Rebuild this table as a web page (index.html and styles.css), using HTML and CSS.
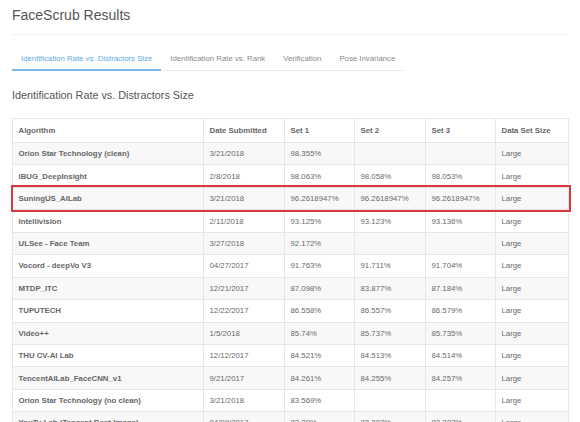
FILE: index.html
```html
<!DOCTYPE html>
<html lang="en">
<head>
<meta charset="utf-8">
<title>FaceScrub Results</title>
<link rel="stylesheet" href="styles.css">
</head>
<body>
<div class="page">
  <h1 class="title">FaceScrub Results</h1>
  <nav class="tabs">
    <a class="tab active">Identification Rate vs. Distractors Size</a>
    <a class="tab">Identification Rate vs. Rank</a>
    <a class="tab">Verification</a>
    <a class="tab">Pose Invariance</a>
  </nav>
  <h2 class="section-title">Identification Rate vs. Distractors Size</h2>
  <table class="results">
    <colgroup>
      <col class="c-alg"><col class="c-date"><col class="c-set1"><col class="c-set2"><col class="c-set3"><col class="c-size">
    </colgroup>
    <thead>
      <tr><th>Algorithm</th><th>Date Submitted</th><th>Set 1</th><th>Set 2</th><th>Set 3</th><th>Data Set Size</th></tr>
    </thead>
    <tbody>
      <tr><td class="name">Orion Star Technology (clean)</td><td>3/21/2018</td><td>98.355%</td><td></td><td></td><td>Large</td></tr>
      <tr><td class="name">iBUG_DeepInsight</td><td>2/8/2018</td><td>98.063%</td><td>98.058%</td><td>98.053%</td><td>Large</td></tr>
      <tr class="highlight"><td class="name">SuningUS_AILab</td><td>3/21/2018</td><td>96.2618947%</td><td>96.2618947%</td><td>96.2618947%</td><td>Large</td></tr>
      <tr><td class="name">Intellivision</td><td>2/11/2018</td><td>93.125%</td><td>93.123%</td><td>93.136%</td><td>Large</td></tr>
      <tr><td class="name">ULSee - Face Team</td><td>3/27/2018</td><td>92.172%</td><td></td><td></td><td>Large</td></tr>
      <tr><td class="name">Vocord - deepVo V3</td><td>04/27/2017</td><td>91.763%</td><td>91.711%</td><td>91.704%</td><td>Large</td></tr>
      <tr><td class="name">MTDP_ITC</td><td>12/21/2017</td><td>87.098%</td><td>83.877%</td><td>87.184%</td><td>Large</td></tr>
      <tr><td class="name">TUPUTECH</td><td>12/22/2017</td><td>86.558%</td><td>86.557%</td><td>86.579%</td><td>Large</td></tr>
      <tr><td class="name">Video++</td><td>1/5/2018</td><td>85.74%</td><td>85.737%</td><td>85.735%</td><td>Large</td></tr>
      <tr><td class="name">THU CV-AI Lab</td><td>12/12/2017</td><td>84.521%</td><td>84.513%</td><td>84.514%</td><td>Large</td></tr>
      <tr><td class="name">TencentAILab_FaceCNN_v1</td><td>9/21/2017</td><td>84.261%</td><td>84.255%</td><td>84.257%</td><td>Large</td></tr>
      <tr><td class="name">Orion Star Technology (no clean)</td><td>3/21/2018</td><td>83.569%</td><td></td><td></td><td>Large</td></tr>
      <tr><td class="name">YouTu Lab (Tencent Best-Image)</td><td>04/08/2017</td><td>83.29%</td><td>83.287%</td><td>83.283%</td><td>Large</td></tr>
    </tbody>
  </table>
</div>
</body>
</html>
```

FILE: styles.css
```css
html, body {
  margin: 0;
  padding: 0;
  background: #ffffff;
  overflow: hidden;
}

.page {
  padding: 6px 12px 0 12px;
  font-family: "Liberation Sans", Arial, Helvetica, sans-serif;
  color: #555555;
}

.title {
  margin: 0;
  font-size: 14px;
  line-height: 18px;
  font-weight: normal;
  color: #555555;
  padding-bottom: 10px;
  border-bottom: 1px solid #f0f0f0;
}

.tabs {
  display: inline-flex;
  border-bottom: 1px solid #ececec;
}

.tab {
  display: block;
  padding: 19px 9px 5px 9px;
  font-size: 7.8px;
  line-height: 10px;
  color: #8a8a8a;
  border-bottom: 2px solid transparent;
  margin-bottom: -1px;
  text-decoration: none;
}

.tab.active {
  color: #5ea9e2;
  border-bottom-color: #78b8ea;
}

.section-title {
  margin: 17px 0 16px 0;
  font-size: 10.8px;
  line-height: 14px;
  font-weight: normal;
  color: #555555;
}

.results {
  width: 556px;
  table-layout: fixed;
  border-collapse: collapse;
  font-size: 7.8px;
  color: #6a6a6a;
}

.c-alg { width: 191px; }
.c-date { width: 81px; }
.c-set1 { width: 70px; }
.c-set2 { width: 71px; }
.c-set3 { width: 70px; }
.c-size { width: 73px; }

.results th,
.results td {
  border: 1px solid #e6e6e6;
  padding: 0 5px 0 5.5px;
  text-align: left;
  white-space: nowrap;
  overflow: hidden;
}

.results th {
  height: 23px;
  font-weight: bold;
  color: #666666;
}

.results td {
  height: 21.45px;
}

.results td.name {
  font-weight: bold;
  color: #666666;
}

.results tbody tr:nth-child(odd) {
  background: #f8f8f8;
}

.results tr.highlight {
  outline: 2px solid #d8393c;
  outline-offset: 0;
}
```
